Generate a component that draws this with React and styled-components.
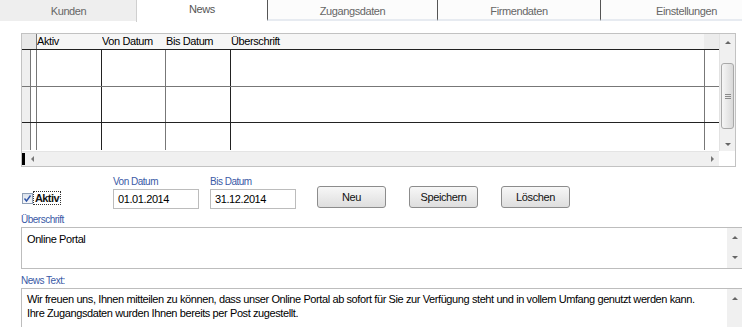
import React from 'react';
import styled, { createGlobalStyle } from 'styled-components';

const GlobalStyle = createGlobalStyle`
  html, body {
    margin: 0;
    padding: 0;
    background: #fff;
  }
  body {
    font-family: "Liberation Sans", Arial, sans-serif;
    font-size: 11px;
    letter-spacing: -0.4px;
    color: #000;
    overflow: hidden;
  }
`;

const Page = styled.div`
  width: 742px;
  height: 327px;
  overflow: hidden;
`;

const TabBar = styled.div`
  display: flex;
  width: 772px;
  height: 22px;
  align-items: flex-start;
`;

const Tab = styled.div`
  flex: 0 0 ${p => p.$w}px;
  box-sizing: border-box;
  height: ${p => (p.$active ? 22 : 21)}px;
  display: flex;
  justify-content: center;
  padding-top: ${p => (p.$active ? 3 : 5)}px;
  background: ${p => p.$bg};
  color: ${p => (p.$active ? '#555' : '#666')};
  border-left: 1px solid ${p => p.$sep || 'transparent'};
  border-bottom: ${p => (p.$active ? 'none' : `2px solid ${p.$under || 'transparent'}`)};
`;

const Content = styled.div`
  padding: 11px 0 0 21px;
`;

const Table = styled.div`
  width: 715px;
  height: 134px;
  box-sizing: border-box;
  border: 1px solid #c2c2c2;
  display: grid;
  grid-template-columns: 697px 16px;
  grid-template-rows: 117px 15px;
`;

const DataArea = styled.div`
  overflow: hidden;
  background: #fff;
`;

const Row = styled.div`
  display: grid;
  grid-template-columns: 8px 6px 65px 64px 65px 474px 15px;
  height: ${p => p.$h}px;
  box-sizing: border-box;
  border-bottom: 1px solid ${p => p.$line || 'transparent'};
  background: ${p => p.$bg || '#fff'};
`;

const Cell = styled.div`
  box-sizing: border-box;
  border-left: 1px solid ${p => p.$line || 'transparent'};
  background: ${p => p.$bg || 'transparent'};
  grid-column: ${p => (p.$span ? `span ${p.$span}` : 'auto')};
  line-height: 15px;
  white-space: nowrap;
  overflow: hidden;
`;

const HScroll = styled.div`
  grid-column: 1;
  grid-row: 2;
  display: flex;
  align-items: center;
  justify-content: space-between;
  background: #f0f0f0;
  border-top: 1px solid #e4e4e4;
  padding-right: 5px;
`;

const Marker = styled.span`
  width: 3px;
  height: 12px;
  background: #000;
  margin-right: 6px;
`;

const LeftEnd = styled.div`
  display: flex;
  align-items: center;
`;

const VScroll = styled.div`
  grid-column: 2;
  grid-row: 1;
  display: flex;
  flex-direction: column;
  align-items: center;
  background: #f0f0f0;
  border-left: 1px solid #e2e2e2;
  padding-top: 7px;
`;

const Thumb = styled.div`
  box-sizing: border-box;
  width: 13px;
  height: 66px;
  margin: 19px 0 14px;
  border: 1px solid #a9a9a9;
  border-radius: 3px;
  background: linear-gradient(to right, #f6f6f6, #d9d9d9);
  display: flex;
  flex-direction: column;
  align-items: center;
  justify-content: center;
  gap: 1px;
`;

const Grip = styled.span`
  width: 6px;
  height: 1px;
  background: #8a8a8a;
`;

const Corner = styled.div`
  grid-column: 2;
  grid-row: 2;
  background: #fff;
`;

const Arrow = styled.span`
  width: 0;
  height: 0;
  ${p => {
    const c = p.$color || '#666';
    switch (p.$dir) {
      case 'up':
        return `border-left: 3px solid transparent; border-right: 3px solid transparent; border-bottom: 3px solid ${c};`;
      case 'down':
        return `border-left: 3px solid transparent; border-right: 3px solid transparent; border-top: 3px solid ${c};`;
      case 'left':
        return `border-top: 3px solid transparent; border-bottom: 3px solid transparent; border-right: 3px solid ${c};`;
      default:
        return `border-top: 3px solid transparent; border-bottom: 3px solid transparent; border-left: 3px solid ${c};`;
    }
  }}
`;

const FormRow = styled.div`
  display: flex;
  align-items: flex-end;
  height: 33px;
  margin-top: 9px;
`;

const CheckField = styled.label`
  flex: 0 0 91px;
  display: flex;
  align-items: center;
  margin-left: 1px;
  margin-bottom: 4px;
`;

const CheckBox = styled.span`
  box-sizing: border-box;
  width: 11px;
  height: 11px;
  border: 1px solid #8f9fb6;
  background: linear-gradient(#dbe2ec, #f7f8fa);
  display: inline-flex;
  align-items: center;
  justify-content: center;
`;

const CheckLabel = styled.span`
  border: 1px dotted #333;
  padding: 0 1px;
  line-height: 12px;
  font-weight: bold;
  letter-spacing: -0.6px;
  color: #111;
`;

const DateField = styled.div`
  flex: 0 0 ${p => p.$w}px;
  display: flex;
  flex-direction: column;
`;

const FieldLabel = styled.div`
  font-size: 10px;
  line-height: 12px;
  letter-spacing: -0.5px;
  color: #3a5aa6;
  margin-bottom: 1px;
`;

const DateInput = styled.div`
  box-sizing: border-box;
  width: 86px;
  height: 20px;
  border: 1px solid #bcbcbc;
  padding: 0 4px;
  line-height: 18px;
`;

const Button = styled.div`
  box-sizing: border-box;
  flex: 0 0 69px;
  height: 22px;
  margin: 0 23px 1px 0;
  border: 1px solid #8c8c8c;
  border-radius: 3px;
  background: linear-gradient(#f7f7f7, #dedede);
  display: flex;
  align-items: center;
  justify-content: center;
  color: #111;
`;

const Section = styled.div`
  margin-top: ${p => p.$top}px;
`;

const TextBox = styled.div`
  box-sizing: border-box;
  display: flex;
  width: 721px;
  height: ${p => p.$h}px;
  border: 1px solid #bdbdbd;
  border-right: none;
`;

const TextContent = styled.div`
  flex: 1;
  min-width: 0;
  overflow: hidden;
  padding: ${p => p.$pt}px 5px 0;
  line-height: 14px;
  white-space: nowrap;
`;

const BoxScroll = styled.div`
  flex: 0 0 15px;
  display: flex;
  flex-direction: column;
  align-items: center;
  justify-content: ${p => (p.$both ? 'space-between' : 'flex-start')};
  background: #f0f0f0;
  padding: ${p => p.$pad};
  box-sizing: border-box;
`;

const bodyCols = ['#777', '#777', '#222', '#777', '#222', '#777'];

const BodyRow = ({ h, line }) => (
  <Row $h={h} $line={line}>
    <Cell $bg="#efefef" />
    {bodyCols.map((c, i) => (
      <Cell key={i} $line={c} />
    ))}
  </Row>
);

export default function App() {
  return (
    <Page>
      <GlobalStyle />
      <TabBar>
        <Tab $w={136} $bg="#eeeeee">Kunden</Tab>
        <Tab $w={131} $bg="#fff" $sep="#cfcfcf" $active>News</Tab>
        <Tab $w={170} $bg="#fcfcfc" $sep="#555" $under="#e7ebf1">Zugangsdaten</Tab>
        <Tab $w={163} $bg="#fcfcfc" $sep="#555" $under="#e7ebf1">Firmendaten</Tab>
        <Tab $w={172} $bg="#fcfcfc" $sep="#555" $under="#e7ebf1">Einstellungen</Tab>
      </TabBar>
      <Content>
        <Table>
          <DataArea>
            <Row $h={16} $line="#222" $bg="#f6f6f6">
              <Cell $span={2} $bg="#e8e8e8" />
              <Cell $line="#777">Aktiv</Cell>
              <Cell>Von Datum</Cell>
              <Cell>Bis Datum</Cell>
              <Cell>Überschrift</Cell>
              <Cell $bg="#ececec" />
            </Row>
            <BodyRow h={37} line="#777" />
            <BodyRow h={36} line="#222" />
            <BodyRow h={28} />
          </DataArea>
          <VScroll>
            <Arrow $dir="up" />
            <Thumb>
              <Grip />
              <Grip />
              <Grip />
            </Thumb>
            <Arrow $dir="down" />
          </VScroll>
          <HScroll>
            <LeftEnd>
              <Marker />
              <Arrow $dir="left" $color="#777" />
            </LeftEnd>
            <Arrow $dir="right" $color="#777" />
          </HScroll>
          <Corner />
        </Table>

        <FormRow>
          <CheckField>
            <CheckBox>
              <svg width="9" height="9" viewBox="0 0 9 9">
                <path d="M1.5 4.5 L3.5 7 L7.5 1.5" fill="none" stroke="#2f55a8" strokeWidth="1.4" />
              </svg>
            </CheckBox>
            <CheckLabel>Aktiv</CheckLabel>
          </CheckField>
          <DateField $w={97}>
            <FieldLabel>Von Datum</FieldLabel>
            <DateInput>01.01.2014</DateInput>
          </DateField>
          <DateField $w={107}>
            <FieldLabel>Bis Datum</FieldLabel>
            <DateInput>31.12.2014</DateInput>
          </DateField>
          <Button>Neu</Button>
          <Button>Speichern</Button>
          <Button>Löschen</Button>
        </FormRow>

        <Section $top={5}>
          <FieldLabel>Überschrift</FieldLabel>
          <TextBox $h={42}>
            <TextContent $pt={4}>Online Portal</TextContent>
            <BoxScroll $both $pad="8px 0 9px">
              <Arrow $dir="up" />
              <Arrow $dir="down" />
            </BoxScroll>
          </TextBox>
        </Section>

        <Section $top={6}>
          <FieldLabel>News Text:</FieldLabel>
          <TextBox $h={60}>
            <TextContent $pt={3}>
              Wir freuen uns, Ihnen mitteilen zu können, dass unser Online Portal ab sofort für Sie zur Verfügung steht und in vollem Umfang genutzt werden kann.
              <br />
              Ihre Zugangsdaten wurden Ihnen bereits per Post zugestellt.
            </TextContent>
            <BoxScroll $pad="8px 0 0">
              <Arrow $dir="up" />
            </BoxScroll>
          </TextBox>
        </Section>
      </Content>
    </Page>
  );
}
